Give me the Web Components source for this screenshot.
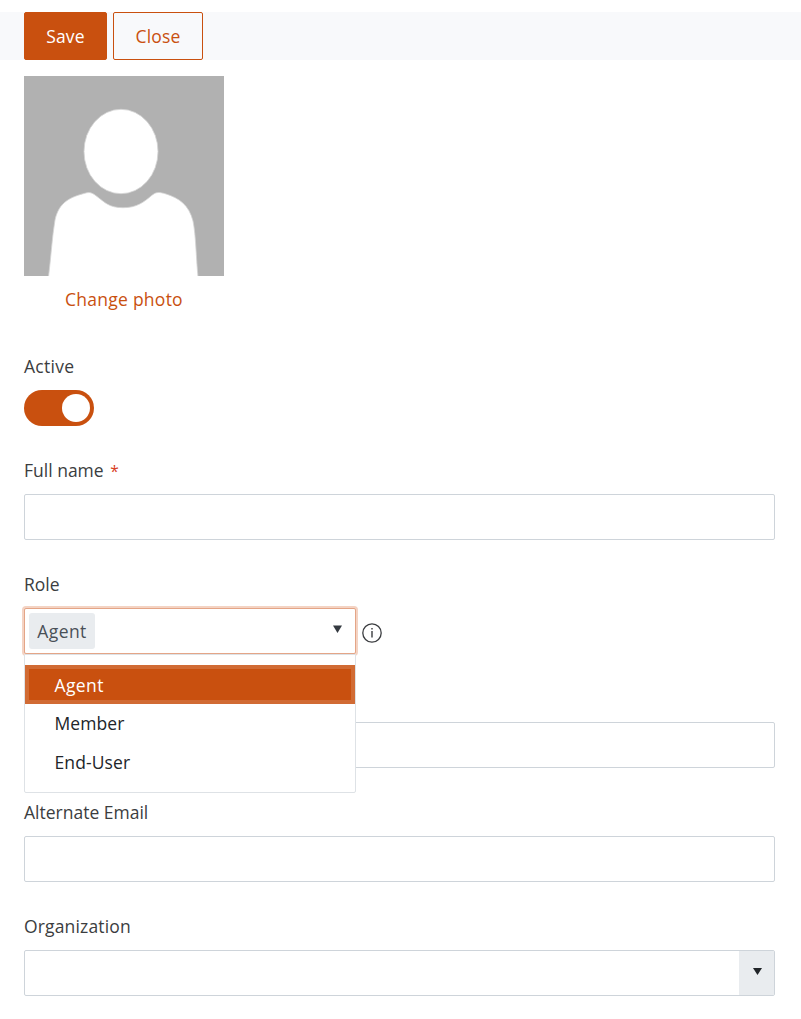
<!DOCTYPE html>
<html lang="en">
<head>
<meta charset="utf-8">
<title>User</title>
<style>
  body {
    margin: 0;
    background: #fff;
    color: #3b3d40;
    font-family: "Open Sans", "Noto Sans", sans-serif;
    font-size: 17.5px;
    line-height: 24px;
    --accent: #c9500f;
    --line: #ced4da;
    --muted: #e9ecef;
  }
</style>
</head>
<body>
<user-form></user-form>
<script>
class ActionButton extends HTMLElement {
  constructor() {
    super();
    this.attachShadow({mode: 'open'}).innerHTML = `
    <style>
      :host {
        display: block;
      }
      button {
        box-sizing: border-box;
        width: 100%;
        height: 48px;
        padding: 0;
        border: 1px solid var(--accent);
        border-radius: 2px;
        background: transparent;
        color: var(--accent);
        font: inherit;
        letter-spacing: .15px;
      }
      :host([primary]) button {
        background: var(--accent);
        color: #fff;
      }
    </style>
    <button type="button"><slot></slot></button>
    `;
  }
}
customElements.define('action-button', ActionButton);

class ProfilePhoto extends HTMLElement {
  constructor() {
    super();
    this.attachShadow({mode: 'open'}).innerHTML = `
    <style>
      :host {
        display: block;
        width: 200px;
        text-align: center;
      }
      svg {
        display: block;
        margin-bottom: 11px;
      }
      a {
        display: block;
        color: var(--accent);
        letter-spacing: .25px;
      }
    </style>
    <svg width="200" height="200" viewBox="0 0 200 200">
      <rect width="200" height="200" fill="#b1b1b1"/>
      <g fill="#fff" stroke="#d4d4d4" stroke-width=".8">
        <ellipse cx="97" cy="75.5" rx="37" ry="42.2"/>
        <path d="M24.500 201C27 181 28 162 31 144C35 126 46 121 63 116.700C67 116 69 117.500 73 120.500C81 126.500 85 131.700 99 131.700C113 131.700 120 126 127 120C132 116 134 115.500 142 118C155 122 165 129 169 145C172 160 172 181 174 201Z"/>
      </g>
    </svg>
    <a><slot></slot></a>
    `;
  }
}
customElements.define('profile-photo', ProfilePhoto);

class FormField extends HTMLElement {
  constructor() {
    super();
    this.attachShadow({mode: 'open'}).innerHTML = `
    <style>
      :host {
        display: block;
      }
      .label {
        height: 24px;
        margin-bottom: 12px;
        letter-spacing: var(--track, 0);
      }
      .star {
        display: none;
        margin-left: 2px;
        color: #d8401f;
        font-size: 15.5px;
      }
      :host([required]) .star {
        display: inline;
      }
    </style>
    <div class="label"><slot name="label"></slot> <span class="star">*</span></div>
    <slot></slot>
    `;
  }
}
customElements.define('form-field', FormField);

class ToggleSwitch extends HTMLElement {
  constructor() {
    super();
    this.attachShadow({mode: 'open'}).innerHTML = `
    <style>
      :host {
        display: flex;
        box-sizing: border-box;
        width: 70px;
        height: 36px;
        padding: 4px;
        border-radius: 18px;
        background: var(--accent);
        justify-content: flex-end;
      }
      span {
        width: 28px;
        height: 28px;
        border-radius: 50%;
        background: #fff;
      }
    </style>
    <span></span>
    `;
  }
}
customElements.define('toggle-switch', ToggleSwitch);

class TextBox extends HTMLElement {
  constructor() {
    super();
    this.attachShadow({mode: 'open'}).innerHTML = `
    <style>
      :host {
        display: flex;
        box-sizing: border-box;
        height: 46px;
        border: 1px solid var(--line);
        border-radius: 2px;
        background: #fff;
        justify-content: flex-end;
      }
      .drop {
        display: none;
        width: 35px;
        background: var(--muted);
        align-items: center;
        justify-content: center;
      }
      :host([dropdown]) .drop {
        display: flex;
      }
      svg {
        margin: 0 0 3px 1px;
      }
    </style>
    <div class="drop"><svg width="9" height="7"><path d="M0 0H9L4.500 7Z" fill="#212529"/></svg></div>
    `;
  }
}
customElements.define('text-box', TextBox);

class RoleSelect extends HTMLElement {
  constructor() {
    super();
    this.attachShadow({mode: 'open'}).innerHTML = `
    <style>
      :host {
        display: flex;
        position: relative;
        align-items: center;
        gap: 6px;
      }
      .box {
        display: flex;
        box-sizing: border-box;
        width: 332px;
        height: 46px;
        padding: 0 13px 0 4px;
        border: 1px solid #e4a587;
        border-radius: 2px;
        background: #fff;
        box-shadow: 0 0 0 2px #f4d3c3;
        align-items: center;
        justify-content: space-between;
      }
      .tag {
        box-sizing: border-box;
        width: 66px;
        height: 36px;
        border-radius: 3px;
        background: var(--muted);
        color: #495057;
        letter-spacing: .4px;
        line-height: 36px;
        text-align: center;
      }
      .arrow {
        margin-bottom: 4px;
      }
      .info {
        margin-top: 3px;
      }
      .menu {
        position: absolute;
        top: 46px;
        left: 0;
        z-index: 1;
        box-sizing: border-box;
        width: 332px;
        height: 139px;
        padding-top: 10px;
        border: 1px solid #dee2e6;
        border-radius: 0 0 2px 2px;
        background: #fff;
      }
    </style>
    <div class="box">
      <span class="tag"><slot name="value"></slot></span>
      <svg class="arrow" width="9" height="8"><path d="M0 .5H9L4.500 8Z" fill="#343a40"/></svg>
    </div>
    <svg class="info" width="20" height="20" fill="none" stroke="#3b3d40">
      <circle cx="10" cy="10" r="9.200" stroke-width="1.300"/>
      <path d="M10 8V14.500M10 5V6.600" stroke-width="1.400"/>
    </svg>
    <div class="menu"><slot></slot></div>
    `;
  }
}
customElements.define('role-select', RoleSelect);

class RoleOption extends HTMLElement {
  constructor() {
    super();
    this.attachShadow({mode: 'open'}).innerHTML = `
    <style>
      :host {
        display: block;
        box-sizing: border-box;
        height: 38.67px;
        padding-left: 29.5px;
        color: #212529;
        letter-spacing: var(--track, .1px);
        line-height: 39.67px;
      }
      :host([selected]) {
        background: var(--accent);
        box-shadow: inset 0 0 0 4px #d16b34;
        color: #fff;
        --track: .4px;
      }
      :host([selected]), :host(:last-of-type) {
        line-height: 41.4px;
      }
    </style>
    <slot></slot>
    `;
  }
}
customElements.define('role-option', RoleOption);

class UserForm extends HTMLElement {
  constructor() {
    super();
    this.attachShadow({mode: 'open'}).innerHTML = `
    <style>
      :host {
        display: block;
        padding-top: 12px;
      }
      .toolbar {
        display: flex;
        gap: 6px;
        padding-left: 24px;
        background: #f8f9fb;
      }
      .save {
        width: 83px;
      }
      .close {
        width: 90px;
      }
      .content {
        padding: 16px 26px 0 24px;
      }
      .fields {
        display: flex;
        flex-direction: column;
        gap: 32px;
        margin-top: 43px;
      }
      .active {
        --track: .3px;
      }
      .organization {
        --track: .15px;
      }
    </style>
    <div class="toolbar">
      <action-button class="save" primary>Save</action-button>
      <action-button class="close">Close</action-button>
    </div>
    <div class="content">
      <profile-photo>Change photo</profile-photo>
      <div class="fields">
        <form-field class="active"><span slot="label">Active</span><toggle-switch></toggle-switch></form-field>
        <form-field required><span slot="label">Full name</span><text-box></text-box></form-field>
        <form-field>
          <span slot="label">Role</span>
          <role-select>
            <span slot="value">Agent</span>
            <role-option selected>Agent</role-option>
            <role-option>Member</role-option>
            <role-option>End-User</role-option>
          </role-select>
        </form-field>
        <form-field><text-box></text-box></form-field>
        <form-field><span slot="label">Alternate Email</span><text-box></text-box></form-field>
        <form-field class="organization"><span slot="label">Organization</span><text-box dropdown></text-box></form-field>
      </div>
    </div>
    `;
  }
}
customElements.define('user-form', UserForm);
</script>
</body>
</html>
